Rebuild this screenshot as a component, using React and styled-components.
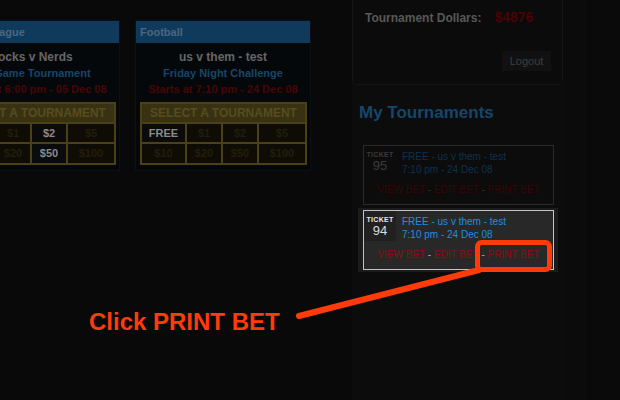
import React from "react";
import styled, { createGlobalStyle } from "styled-components";

const GlobalStyle = createGlobalStyle`
  html, body { margin: 0; padding: 0; background: #090909; }
  body { font-family: "Liberation Sans", Arial, sans-serif; }
  * { box-sizing: border-box; }
`;

const Page = styled.div`
  position: relative;
  width: 620px;
  height: 400px;
  overflow: hidden;
  display: flex;
  background: #090909;
  font-family: "Liberation Sans", Arial, sans-serif;
`;

const LeftColumn = styled.div`
  width: 352px;
  flex: none;
  overflow: hidden;
  padding-top: 20px;
`;

const CardRow = styled.div`
  display: flex;
  gap: 15px;
  margin-left: -56px;
`;

const Card = styled.div`
  width: 176px;
  flex: none;
  background: #05080b;
  border: 1px solid #0b1016;
  padding-bottom: 5px;
`;

const CardHeader = styled.div`
  height: 22px;
  line-height: 22px;
  background: #0f3a5c;
  color: #4a6781;
  font-weight: bold;
  font-size: 11px;
  padding-left: 4px;
  white-space: nowrap;
`;

const CardBody = styled.div`
  padding-top: 6px;
  text-align: center;
  white-space: nowrap;
`;

const CardTitle = styled.div`
  font-weight: bold;
  font-size: 12px;
  line-height: 16px;
  color: #666666;
`;

const CardLine = styled.div`
  font-weight: bold;
  font-size: 11px;
  line-height: ${(p) => p.$lh || 16}px;
  color: ${(p) => p.$color};
`;

const GoldTable = styled.div`
  margin: 4px 3px 0 4px;
  border: 2px solid #4a4117;
  background: #4a4117;
  display: grid;
  grid-template-columns: 43px 34px 34px 1fr;
  gap: 2px;
`;

const GoldHeader = styled.div`
  grid-column: 1 / -1;
  height: 18px;
  line-height: 18px;
  background: #393212;
  color: #564d1f;
  font-weight: bold;
  font-size: 12px;
  text-align: center;
  white-space: nowrap;
  overflow: hidden;
`;

const Cell = styled.div`
  height: ${(p) => p.$h || 18}px;
  line-height: ${(p) => p.$h || 18}px;
  background: ${(p) => (p.$active ? "#0b0b0b" : "#0f0c05")};
  color: ${(p) => (p.$active ? "#8a8a8a" : "#221e0b")};
  font-weight: bold;
  font-size: 11px;
  text-align: center;
`;

const Sidebar = styled.div`
  width: 211px;
  flex: none;
  background: #0c0c0c;
  display: flex;
  flex-direction: column;
`;

const AccountPanel = styled.div`
  height: 85px;
  border: 1px solid #151515;
  border-top: none;
  border-radius: 0 0 5px 5px;
  background: #0b0b0b;
  padding: 10px 11px 0 12px;
`;

const DollarsRow = styled.div`
  display: flex;
  align-items: baseline;
  gap: 13px;
  line-height: 14px;
`;

const DollarsLabel = styled.span`
  font-weight: bold;
  font-size: 12px;
  color: #585858;
`;

const DollarsValue = styled.span`
  font-weight: bold;
  font-size: 14px;
  color: #4a0202;
`;

const LogoutRow = styled.div`
  display: flex;
  justify-content: flex-end;
  margin-top: 26px;
`;

const LogoutButton = styled.div`
  width: 49px;
  height: 20px;
  line-height: 20px;
  background: #111111;
  color: #3e3e3e;
  font-size: 11px;
  text-align: center;
`;

const SectionTitle = styled.div`
  margin: 18px 0 0 7px;
  font-weight: bold;
  font-size: 17px;
  line-height: 20px;
  color: #15466b;
`;

const TicketList = styled.div`
  margin-top: 20px;
  padding: 0 5px 0 6px;
  display: flex;
  flex-direction: column;
  gap: 1px;
`;

const TicketFrame = styled.div`
  padding: 2px 4px 2px 5px;
  background: ${(p) => (p.$active ? "#1b1b1b" : "transparent")};
`;

const Ticket = styled.div`
  border: 1px solid ${(p) => (p.$active ? "#c4c4c4" : "#2a2a2a")};
  background: ${(p) => (p.$active ? "#282828" : "#0c0c0c")};
`;

const TicketTop = styled.div`
  display: flex;
  height: 30px;
`;

const NumberCell = styled.div`
  width: 32px;
  flex: none;
  display: flex;
  flex-direction: column;
  align-items: center;
  padding-top: 5px;
  background: ${(p) => (p.$active ? "#212121" : "transparent")};
`;

const TicketLabel = styled.div`
  font-size: 7px;
  font-weight: bold;
  line-height: 8px;
  letter-spacing: 0.3px;
  color: ${(p) => (p.$active ? "#e8e8e8" : "#3a3a3a")};
`;

const TicketNumber = styled.div`
  font-size: 13px;
  line-height: 14px;
  color: ${(p) => (p.$active ? "#dcdcdc" : "#3c3c3c")};
`;

const TicketInfo = styled.div`
  padding: 4px 0 0 6px;
  font-size: 10px;
  line-height: 13px;
  color: ${(p) => (p.$active ? "#1f8ee0" : "#0e324d")};
  white-space: nowrap;
`;

const ActionRow = styled.div`
  height: 28px;
  line-height: 28px;
  text-align: center;
  font-size: 10px;
  white-space: nowrap;
`;

const ActionLink = styled.span`
  color: ${(p) => (p.$active ? "#8a1010" : "#3a0505")};
`;

const ActionSep = styled.span`
  color: ${(p) => (p.$active ? "#a8a8a8" : "#333333")};
`;

const Gutter = styled.div`
  width: 25px;
  flex: none;
  background: #0b0b0b;
  border-right: 1px solid #070707;
`;

const Edge = styled.div`
  flex: 1;
  background: #0a0a0a;
`;

const Annotation = styled.div`
  position: absolute;
  inset: 0;
  pointer-events: none;
`;

const AnnotationSvg = styled.svg`
  position: absolute;
  left: 0;
  top: 0;
`;

const Callout = styled.div`
  position: absolute;
  left: 89px;
  top: 310px;
  font-family: "Liberation Sans", Arial, sans-serif;
  font-weight: bold;
  font-size: 24px;
  line-height: 24px;
  color: #ff3b0b;
  white-space: nowrap;
`;

const cards = [
  {
    sport: "Rugby League",
    title: "Jocks v Nerds",
    sub: "Big Game Tournament",
    when: "Starts at 6:00 pm - 05 Dec 08",
    active: ["$2", "$50"],
  },
  {
    sport: "Football",
    title: "us v them - test",
    sub: "Friday Night Challenge",
    when: "Starts at 7:10 pm - 24 Dec 08",
    active: ["FREE"],
  },
];

const row1 = ["FREE", "$1", "$2", "$5"];
const row2 = ["$10", "$20", "$50", "$100"];

function TournamentCard({ c }) {
  return (
    <Card>
      <CardHeader>{c.sport}</CardHeader>
      <CardBody>
        <CardTitle>{c.title}</CardTitle>
        <CardLine $color="#17466a">{c.sub}</CardLine>
        <CardLine $color="#4b0404" $lh={17}>{c.when}</CardLine>
      </CardBody>
      <GoldTable>
        <GoldHeader>SELECT A TOURNAMENT</GoldHeader>
        {row1.map((v) => (
          <Cell key={v} $active={c.active.includes(v)}>{v}</Cell>
        ))}
        {row2.map((v) => (
          <Cell key={v} $h={19} $active={c.active.includes(v)}>{v}</Cell>
        ))}
      </GoldTable>
    </Card>
  );
}

function TicketCard({ number, active }) {
  return (
    <TicketFrame $active={active}>
      <Ticket $active={active}>
        <TicketTop>
          <NumberCell $active={active}>
            <TicketLabel $active={active}>TICKET</TicketLabel>
            <TicketNumber $active={active}>{number}</TicketNumber>
          </NumberCell>
          <TicketInfo $active={active}>
            <div>FREE - us v them - test</div>
            <div>7:10 pm - 24 Dec 08</div>
          </TicketInfo>
        </TicketTop>
        <ActionRow>
          <ActionLink $active={active}>VIEW BET</ActionLink>
          <ActionSep $active={active}> - </ActionSep>
          <ActionLink $active={active}>EDIT BET</ActionLink>
          <ActionSep $active={active}> - </ActionSep>
          <ActionLink $active={active}>PRINT BET</ActionLink>
        </ActionRow>
      </Ticket>
    </TicketFrame>
  );
}

export default function App() {
  return (
    <>
      <GlobalStyle />
      <Page>
        <LeftColumn>
          <CardRow>
            {cards.map((c) => (
              <TournamentCard key={c.title} c={c} />
            ))}
          </CardRow>
        </LeftColumn>
        <Sidebar>
          <AccountPanel>
            <DollarsRow>
              <DollarsLabel>Tournament Dollars:</DollarsLabel>
              <DollarsValue>$4876</DollarsValue>
            </DollarsRow>
            <LogoutRow>
              <LogoutButton>Logout</LogoutButton>
            </LogoutRow>
          </AccountPanel>
          <SectionTitle>My Tournaments</SectionTitle>
          <TicketList>
            <TicketCard number="95" />
            <TicketCard number="94" active />
          </TicketList>
        </Sidebar>
        <Gutter />
        <Edge />
        <Annotation>
          <AnnotationSvg width="620" height="400" viewBox="0 0 620 400">
            <line x1="299" y1="316" x2="479" y2="270" stroke="#ff3b0b" strokeWidth="6" strokeLinecap="round" />
            <rect x="477.5" y="242.5" width="72" height="27" rx="4" ry="4" fill="none" stroke="#ff3b0b" strokeWidth="5" />
          </AnnotationSvg>
          <Callout>Click PRINT BET</Callout>
        </Annotation>
      </Page>
    </>
  );
}
